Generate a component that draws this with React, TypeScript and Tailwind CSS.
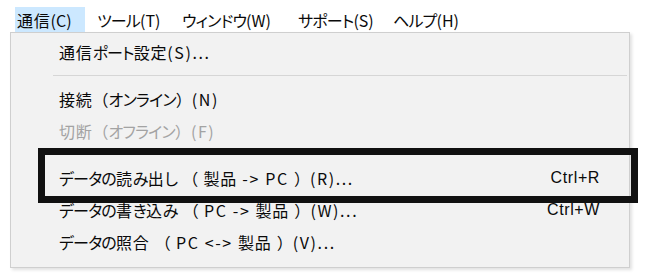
import React from "react";

const font = "font-['Noto_Sans_CJK_JP','Noto_Sans',sans-serif] [font-feature-settings:'palt']";

type Item = { label: string; shortcut?: string; disabled?: boolean };

function segClass(ch: string): string {
  if (/[\u3040-\u30ff]/.test(ch)) return "kana";
  if (/[（）]/.test(ch)) return "paren";
  if (/[\u4e00-\u9fff]/.test(ch)) return "kanji";
  return "ascii";
}

const menuCls: Record<string, string> = {
  kana: "tracking-[-0.8px]",
  paren: "[font-feature-settings:normal] tracking-[0px]",
  kanji: "tracking-[0.8px]",
  ascii: "tracking-[1.6px]",
};

const barCls: Record<string, string> = {
  kana: "tracking-[-0.8px]",
  paren: "[font-feature-settings:normal] tracking-[0px]",
  kanji: "tracking-[0.8px]",
  ascii: "tracking-[0px]",
};

function Styled({ text, map }: { text: string; map: Record<string, string> }) {
  const runs: { k: string; s: string }[] = [];
  for (const ch of text) {
    const k = segClass(ch);
    const last = runs[runs.length - 1];
    if (last && last.k === k) last.s += ch;
    else runs.push({ k, s: ch });
  }
  return (
    <span className="whitespace-pre">
      {runs.map((r, i) => (
        <span key={i} className={map[r.k]}>
          {r.s}
        </span>
      ))}
    </span>
  );
}

function Row({ label, shortcut, disabled }: Item) {
  return (
    <div
      className={`flex h-[32px] items-center justify-between pl-[48px] pr-[29px] text-[16px] leading-none ${
        disabled ? "text-[#a3a3a3]" : "text-[#0a0a0a]"
      }`}
    >
      <Styled text={label} map={menuCls} />
      {shortcut && (
        <span className="font-['Liberation_Sans',sans-serif] text-[16px] tracking-[0.6px]">{shortcut}</span>
      )}
    </div>
  );
}

function Sep() {
  return (
    <div className="py-[7px] pl-[42px] pr-[2px]">
      <div className="h-px bg-[#d6d6d6]" />
    </div>
  );
}

export default function App() {
  return (
    <div className={`relative h-[276px] w-[650px] overflow-hidden bg-white ${font}`}>
      <div className="flex h-[32px] items-end pl-[15px] text-[16px] leading-none text-[#0a0a0a]">
        <div className="flex h-[25px] w-[70px] items-center bg-[#cce8ff] pl-[2px]">
          <Styled text="通信(C)" map={barCls} />
        </div>
        <div className="ml-[12px] flex h-[25px] w-[85px] items-center">
          <Styled text="ツール(T)" map={barCls} />
        </div>
        <div className="flex h-[25px] w-[116px] items-center">
          <Styled text="ウィンドウ(W)" map={barCls} />
        </div>
        <div className="flex h-[25px] w-[95px] items-center">
          <Styled text="サポート(S)" map={barCls} />
        </div>
        <div className="flex h-[25px] w-[80px] items-center">
          <Styled text="ヘルプ(H)" map={barCls} />
        </div>
      </div>
      <div className="ml-[10px] w-[620px] border border-[#cfcfcf] bg-[#f2f2f2] pt-[3px] pb-[9px] shadow-[2px_2px_3px_rgba(0,0,0,0.12)]">
        <Row label="通信ポート設定(S)..." />
        <Sep />
        <Row label="接続（オンライン）(N)" />
        <Row label="切断（オフライン）(F)" disabled />
        <Sep />
        <Row label="データの読み出し （ 製品 -> PC ）(R)..." shortcut="Ctrl+R" />
        <Row label="データの書き込み （ PC -> 製品 ）(W)..." shortcut="Ctrl+W" />
        <Row label="データの照合 （ PC <-> 製品 ）(V)..." />
      </div>
      <div className="absolute left-[38px] top-[148px] h-[55px] w-[600px] border-[7px] border-[#111]" />
    </div>
  );
}
